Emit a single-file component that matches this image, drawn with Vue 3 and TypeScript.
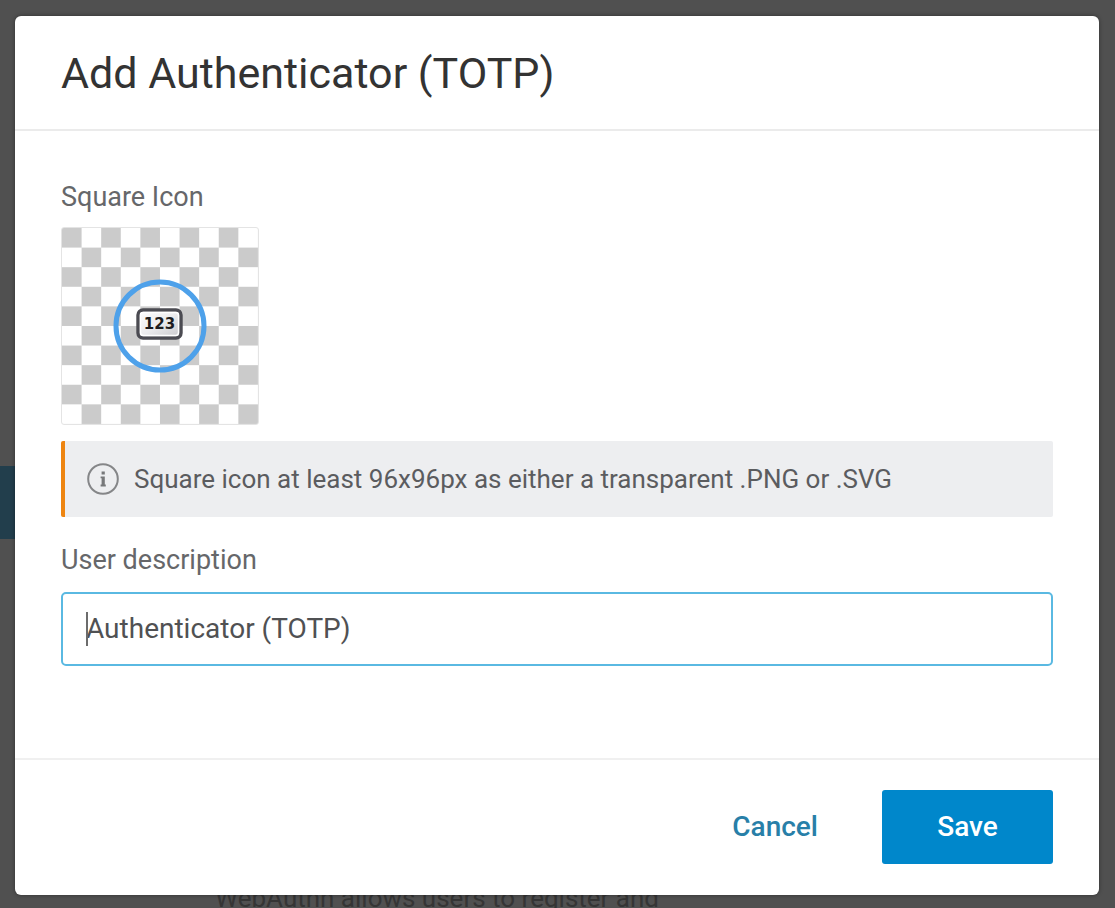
<script setup lang="ts">
import { onMounted, ref } from 'vue'

const description = ref('Authenticator (TOTP)')
const field = ref<HTMLInputElement | null>(null)

onMounted(() => {
  field.value?.focus()
  field.value?.setSelectionRange(0, 0)
})
</script>

<template>
  <div class="page">
    <div class="backdrop" aria-hidden="true">
      <div class="backdrop-tab"></div>
      <p class="backdrop-text">WebAuthn allows users to register and</p>
    </div>

    <form class="dialog" role="dialog" aria-labelledby="dialog-title" @submit.prevent>
      <header class="dialog-header">
        <h1 id="dialog-title">Add Authenticator (TOTP)</h1>
      </header>

      <main class="dialog-body">
        <p class="label">Square Icon</p>
        <div class="icon-preview">
          <svg viewBox="0 0 96 96" role="img" aria-label="One-time code">
            <defs>
              <linearGradient id="plate" x1="0" y1="0" x2="1" y2="1">
                <stop offset="0" stop-color="#ffffff" />
                <stop offset="0.5" stop-color="#ececee" />
                <stop offset="1" stop-color="#c6c6ca" />
              </linearGradient>
            </defs>
            <circle cx="48" cy="48" r="44" fill="none" stroke="#4ea1ea" stroke-width="5" />
            <rect x="26" y="32" width="43" height="28" rx="5" fill="url(#plate)" stroke="#4b4b52" stroke-width="3.4" />
            <rect x="28.5" y="34.5" width="38" height="23" rx="3" fill="none" stroke="#ffffff" stroke-width="1.4" />
            <text x="47.5" y="51" text-anchor="middle">123</text>
          </svg>
        </div>

        <div class="notice">
          <svg class="notice-icon" viewBox="0 0 32 32" aria-hidden="true">
            <circle cx="16" cy="16" r="14.8" fill="none" stroke="#858688" stroke-width="2" />
            <path d="M14.6 8.6h3.2v3h-3.2zM13.6 13.4h4.2v8.1h1v1.9h-5.2v-1.9h1v-6.2h-1z" fill="#77787a" />
          </svg>
          <span>Square icon at least 96x96px as either a transparent .PNG or .SVG</span>
        </div>

        <label class="label" for="description">User description</label>
        <div class="field">
          <input id="description" ref="field" v-model="description" type="text" />
          <span class="caret"></span>
        </div>
      </main>

      <footer class="dialog-footer">
        <button type="button" class="cancel">Cancel</button>
        <button type="submit" class="save">Save</button>
      </footer>
    </form>
  </div>
</template>

<style>
body {
  margin: 0;
  background: #505050;
}
</style>

<style scoped>
.page {
  position: relative;
  box-sizing: border-box;
  min-height: 100vh;
  padding: 16px 16px 13px 15px;
  display: flex;
  overflow: hidden;
  background: #505050;
  font-family: Roboto, "Liberation Sans", sans-serif;
  font-size: 26px;
  line-height: 32px;
}

.backdrop {
  position: absolute;
  inset: 0;
}

.backdrop-tab {
  position: absolute;
  top: 466px;
  left: 0;
  width: 40px;
  height: 73px;
  background: #223e4c;
}

.backdrop-text {
  position: absolute;
  left: 215px;
  top: 882px;
  margin: 0;
  color: #353535;
  white-space: nowrap;
}

.dialog {
  position: relative;
  flex: 1;
  display: flex;
  flex-direction: column;
  border-radius: 6px;
  background: #fff;
  box-shadow: 0 0 4px rgba(0, 0, 0, 0.4);
}

.dialog-header {
  padding: 32px 46px 31px;
  border-bottom: 2px solid #ebebeb;
}

h1 {
  margin: 0;
  font-size: 43px;
  font-weight: 400;
  line-height: 50px;
  color: #333;
}

.dialog-body {
  flex: 1;
  padding: 50px 46px 32px;
  display: flex;
  flex-direction: column;
}

.label {
  margin: 0;
  font-size: 27px;
  color: #66676a;
}

.icon-preview {
  box-sizing: border-box;
  width: 198px;
  height: 198px;
  margin-top: 14px;
  display: grid;
  place-items: center;
  border: 1px solid #e4e4e4;
  border-radius: 3px;
  background: repeating-conic-gradient(#fff 0 25%, #cbcbcb 0 50%) 0 0 / 20% 20%;
}

.icon-preview svg {
  width: 96px;
  height: 96px;
}

.icon-preview text {
  font: bold 15px "DejaVu Sans", sans-serif;
  fill: #1d1d20;
}

.notice {
  margin: 16px 0 27px;
  padding: 22px 24px 22px 22px;
  display: flex;
  align-items: center;
  gap: 15px;
  border-left: 4px solid #ee8511;
  border-radius: 2px;
  background: #edeef0;
  color: #5b5c5f;
}

.notice-icon {
  flex: none;
  width: 32px;
  height: 32px;
}

.field {
  position: relative;
  margin-top: 16px;
}

input {
  display: block;
  box-sizing: border-box;
  width: 100%;
  padding: 19px 23px;
  border: 2px solid #5ab9e2;
  border-radius: 5px;
  outline: none;
  background: #fff;
  color: #505153;
  caret-color: transparent;
  font: inherit;
  font-size: 28px;
}

.caret {
  position: absolute;
  top: 20px;
  left: 25px;
  width: 2px;
  height: 34px;
  background: #6c6c6c;
}

.dialog-footer {
  padding: 30px 46px 31px;
  display: flex;
  justify-content: flex-end;
  gap: 32px;
  border-top: 2px solid #f0f0f0;
}

button {
  padding: 21px 32px;
  border: 0;
  border-radius: 3px;
  font: inherit;
  font-size: 28px;
  font-weight: 500;
  cursor: pointer;
}

.cancel {
  background: transparent;
  color: #287fa8;
}

.save {
  min-width: 171px;
  background: #0087cb;
  color: #fff;
}
</style>
